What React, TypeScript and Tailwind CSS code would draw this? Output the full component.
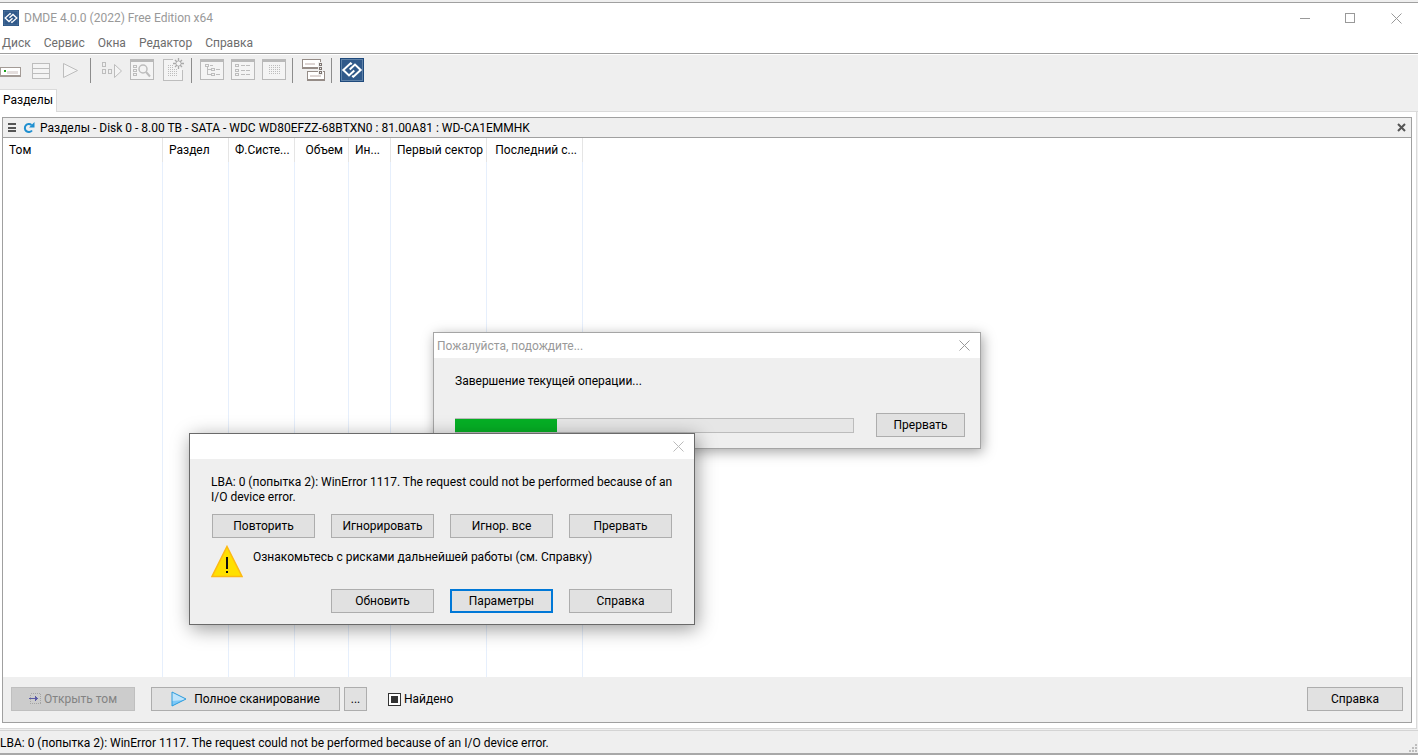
import type { ReactNode } from "react";

const columns = [
  { name: "Том", width: "w-[160px]", align: "text-left" },
  { name: "Раздел", width: "w-[66px]", align: "text-left" },
  { name: "Ф.Систе...", width: "w-[66px]", align: "text-left" },
  { name: "Объем", width: "w-[54px]", align: "text-right" },
  { name: "Ин...", width: "w-[42px]", align: "text-left" },
  { name: "Первый сектор", width: "w-[96px]", align: "text-right" },
  { name: "Последний с...", width: "w-[96px]", align: "text-right" },
];

const menu = ["Диск", "Сервис", "Окна", "Редактор", "Справка"];

const errorText =
  "LBA: 0 (попытка 2): WinError 1117. The request could not be performed because of an I/O device error.";

function Logo({ size }: { size: number }) {
  return (
    <svg width={size} height={size} viewBox="0 0 24 24" fill="none">
      <rect width="24" height="24" fill="#1f4a7c" />
      <rect x="1" y="1" width="22" height="22" fill="#5f82a8" />
      <rect x="2" y="2" width="20" height="20" fill="#30598a" />
      <g stroke="#fff" strokeWidth="2">
        <path d="M11.800 6.300 10.600 5.300 3.300 12 9 17.400l5.300-5" />
        <path d="M12.200 17.700l1.200 1L20.700 12 15 6.600l-5.300 5" />
      </g>
    </svg>
  );
}

function Close() {
  return (
    <svg width="11" height="11" viewBox="0 0 11 11">
      <path d="M0.500 0.500l10 10M10.500 0.500l-10 10" stroke="currentColor" fill="none" />
    </svg>
  );
}

function Icon({ children }: { children: ReactNode }) {
  return (
    <svg width="24" height="24" viewBox="0 0 24 24" fill="none" stroke="#bdbdbd" shapeRendering="crispEdges">
      {children}
    </svg>
  );
}

function Frame({ children }: { children?: ReactNode }) {
  return (
    <Icon>
      <rect x="0.500" y="1.500" width="23" height="20" stroke="#b9b9b9" fill="#f4f4f4" />
      <path d="M0 2.500h24" stroke="#b9b9b9" strokeWidth="3" />
      {children}
    </Icon>
  );
}

function Tool({ label, children }: { label: string; children: ReactNode }) {
  return (
    <button type="button" aria-label={label} className="size-6 shrink-0">
      {children}
    </button>
  );
}

function Sep() {
  return <div className="ml-1.5 mr-2 h-[25px] w-px bg-[#8c8c8c]" />;
}

function PushButton({ children, className = "" }: { children: ReactNode; className?: string }) {
  return (
    <button
      type="button"
      className={`flex h-6 items-center justify-center border bg-[#e1e1e1] ${className || "border-[#adadad]"}`}
    >
      {children}
    </button>
  );
}

function Toolbar() {
  return (
    <div className="flex h-[35px] items-start border-t border-white pt-[3px]">
      <div className="flex gap-1.5">
        <Tool label="Выбрать диск">
          <Icon>
            <rect x="0.500" y="9.500" width="20" height="9" rx="1" stroke="#a39b96" fill="#fff" />
            <path d="M1 18h19" stroke="#a39b96" strokeWidth="2" />
            <path d="M7 14.500h11" stroke="#e4dedd" strokeWidth="3" />
            <path d="M4 13h2" stroke="#1ba01b" strokeWidth="2" />
          </Icon>
        </Tool>
        <Tool label="Разделы">
          <Icon>
            <rect x="2.500" y="5.500" width="17" height="5" rx="1" fill="#f4f4f4" />
            <rect x="2.500" y="10.500" width="17" height="5" rx="1" fill="#f4f4f4" />
            <rect x="2.500" y="15.500" width="17" height="5" rx="1" fill="#f4f4f4" />
          </Icon>
        </Tool>
        <Tool label="Полное сканирование">
          <Icon>
            <path d="M3.500 5.500v14l14-7z" shapeRendering="auto" fill="#f4f4f4" />
          </Icon>
        </Tool>
      </div>
      <Sep />
      <div className="flex gap-[7px]">
        <Tool label="Продолжить">
          <Icon>
            <rect x="3.500" y="4.500" width="3" height="4" />
            <rect x="3.500" y="11.500" width="3" height="4" />
            <rect x="9.500" y="11.500" width="3" height="4" />
            <path d="M15.500 6.500v13l7-6.500z" shapeRendering="auto" fill="#f4f4f4" />
          </Icon>
        </Tool>
        <Tool label="Поиск">
          <Frame>
            <path d="M3.500 7.500h3v2h-3zM3.500 11.500h3v2h-3zM3.500 15.500h3v2h-3z" />
            <g shapeRendering="auto">
              <circle cx="13" cy="11" r="4" strokeWidth="1.500" />
              <path d="M16 14l4 4.500" strokeWidth="2" />
            </g>
          </Frame>
        </Tool>
        <Tool label="Новый">
          <Icon>
            <path d="M12 1.500H2.500v21h19V12" fill="#f4f4f4" />
            <path d="M7 7.500h5M7 9.500h6M7 11.500h10M7 13.500h10M7 15.500h10M7 17.500h10" strokeDasharray="1 1" />
            <g shapeRendering="auto">
              <circle cx="17.500" cy="5.500" r="2.500" fill="#f4f4f4" />
              <path
                d="M17.500 0v3M17.500 8v3M12 5.500h3M20 5.500h3M14 2l2 2M19 7l2 2M21 2l-2 2M14 9l2-2"
                stroke="#aaa"
                strokeWidth="1.300"
              />
            </g>
          </Icon>
        </Tool>
      </div>
      <Sep />
      <div className="flex gap-[7px]">
        <Tool label="Дерево">
          <Frame>
            <path d="M5.500 6.500h3v2h-3zM11.500 10.500h3v2h-3zM11.500 15.500h3v2h-3zM7.500 9v7.500H11M8 11.500h3M10 7.500h3M16 11.500h4M16 16.500h4" />
          </Frame>
        </Tool>
        <Tool label="Список">
          <Frame>
            <path d="M4.500 6.500h3v2h-3zM4.500 11.500h3v2h-3zM4.500 15.500h3v2h-3zM10 7.500h4M15 7.500h4M10 12.500h4M15 12.500h4M10 16.500h4M15 16.500h4" />
          </Frame>
        </Tool>
        <Tool label="Дамп">
          <Frame>
            <path
              d="M7 7.500h11M7 9.500h11M7 11.500h11M7 13.500h11M7 15.500h11"
              strokeDasharray="1 1"
            />
          </Frame>
        </Tool>
      </div>
      <Sep />
      <Tool label="Окна">
        <Icon>
          <rect x="1.500" y="1.500" width="18" height="9" rx="1" stroke="#958c87" fill="#fff" />
          <path d="M2 10h17" stroke="#958c87" strokeWidth="2" />
          <rect x="6.500" y="13.500" width="17" height="9" rx="1" stroke="#958c87" fill="#fff" />
          <path d="M7 22h16" stroke="#958c87" strokeWidth="2" />
          <path d="M4 6h10M9 18h11" stroke="#ddd5d3" strokeWidth="2" />
          <path d="M17 4h5v13h-5z" fill="#efefef" stroke="none" />
          <path d="M18.500 5.500h2v2h-2zM18.500 9.500h2v2h-2zM18.500 13.500h2v2h-2z" stroke="#7c7470" />
        </Icon>
      </Tool>
      <Sep />
      <Tool label="О программе">
        <Logo size={24} />
      </Tool>
    </div>
  );
}

function WaitDialog() {
  return (
    <section
      aria-label="Пожалуйста, подождите..."
      className="absolute left-[433px] top-[332px] w-[548px] border border-[#a5a5a5] bg-[#efefef] shadow-[2px_3px_12px_rgba(0,0,0,0.35)]"
    >
      <header className="flex h-[25px] items-center justify-between bg-white pl-[3px] pr-2.5 text-[#999]">
        <span>Пожалуйста, подождите...</span>
        <button type="button" aria-label="Закрыть">
          <Close />
        </button>
      </header>
      <div className="pb-[11px] pl-[21px] pr-[15px] pt-[15px]">
        <p>Завершение текущей операции...</p>
        <div className="mt-6 flex items-center">
          <div className="h-[15px] flex-1 border border-l-0 border-[#bcbcbc] bg-[#e6e6e6]">
            <div className="h-full w-[102px] bg-[#06b025]" />
          </div>
          <PushButton className="ml-[22px] w-[89px] border-[#adadad]">Прервать</PushButton>
        </div>
      </div>
    </section>
  );
}

function ErrorDialog() {
  return (
    <section
      aria-label="Ошибка"
      className="absolute left-[189px] top-[433px] w-[506px] border border-[#6a6a6a] bg-[#efefef] shadow-[2px_4px_18px_rgba(0,0,0,0.4)]"
    >
      <header className="flex h-[25px] items-center justify-end bg-white pr-2.5 text-[#bbb]">
        <button type="button" aria-label="Закрыть">
          <Close />
        </button>
      </header>
      <div className="pb-[11px] pt-4">
        <p className="pl-[21px] pr-3 leading-[15px]">{errorText}</p>
        <div className="mt-[9px] grid grid-cols-4 gap-4 px-[22px]">
          <PushButton>Повторить</PushButton>
          <PushButton>Игнорировать</PushButton>
          <PushButton>Игнор. все</PushButton>
          <PushButton>Прервать</PushButton>
        </div>
        <div className="mt-[7px] flex gap-2.5 px-[21px]">
          <svg width="32" height="33" viewBox="0 0 32 33">
            <path d="M16 1.500 31 31.500H1z" fill="#ffe000" stroke="#fdb913" strokeWidth="1.500" />
            <path d="M15 12h2v12h-2zM15 26h2v2h-2z" fill="#111" />
          </svg>
          <p className="pt-1">Ознакомьтесь с рисками дальнейшей работы (см. Справку)</p>
        </div>
        <div className="mt-[11px] grid grid-cols-4 gap-4 px-[22px]">
          <PushButton className="col-start-2 border-[#adadad]">Обновить</PushButton>
          <PushButton className="border-2 border-[#0078d7]">Параметры</PushButton>
          <PushButton>Справка</PushButton>
        </div>
      </div>
    </section>
  );
}

export default function App() {
  return (
    <div className="relative flex h-screen flex-col overflow-hidden bg-[#efefef] font-['Roboto','Noto_Sans',sans-serif] text-[12px] leading-4 text-black">
      <header className="mt-0.5 border-b border-t border-[#a0a0a0] bg-white text-[#999]">
        <div className="flex h-[30px] items-center pl-[3px] pr-4">
          <Logo size={16} />
          <h1 className="ml-[5px] flex-1">DMDE 4.0.0 (2022) Free Edition x64</h1>
          <div className="flex gap-[35px]">
            <button type="button" aria-label="Свернуть">
              <svg width="11" height="11">
                <path d="M1 5.500h10" stroke="currentColor" />
              </svg>
            </button>
            <button type="button" aria-label="Развернуть">
              <svg width="11" height="11">
                <rect x="0.500" y="0.500" width="9" height="9" fill="none" stroke="currentColor" />
              </svg>
            </button>
            <button type="button" aria-label="Закрыть">
              <Close />
            </button>
          </div>
        </div>
        <nav className="flex h-5 items-center gap-[13px] pl-0.5 text-[#6d6d6d]">
          {menu.map((item) => (
            <a key={item} href="#">
              {item}
            </a>
          ))}
        </nav>
      </header>

      <Toolbar />

      {/* Tabs */}
      <div className="flex h-[23px] shrink-0 items-stretch">
        <button type="button" className="w-[57px] border-r border-t border-[#dadada] bg-white pb-0.5 pl-[3px] text-left">
          Разделы
        </button>
        <div className="flex-1 border-b border-[#dadada]" />
      </div>

      {/* Partition panel */}
      <main className="mr-px flex min-h-0 flex-1 flex-col border-b border-r border-[#dadada] bg-white pb-[5px] pl-0.5 pr-1 pt-[5px]">
        <div className="flex min-h-0 flex-1 flex-col border border-[#a0a0a0] bg-[#efefef]">
          <div className="flex h-5 shrink-0 items-center border-b border-[#a0a0a0] px-[5px]">
            <svg width="8" height="9" shapeRendering="crispEdges">
              <path d="M0 1h8M0 4.500h8M0 8h8" stroke="#555" strokeWidth="2" />
            </svg>
            <svg width="12" height="12" viewBox="0 0 12 12" className="ml-[7px]" fill="none">
              <path d="M8.500 3A4 4 0 1 0 9 8.500" stroke="#1e8fd0" strokeWidth="2" />
              <path d="M11.500 0v5.500H6z" fill="#1e8fd0" />
            </svg>
            <h2 className="ml-[5px] flex-1">
              Разделы - Disk 0 - 8.00 TB - SATA - WDC WD80EFZZ-68BTXN0 : 81.00A81 : WD-CA1EMMHK
            </h2>
            <button type="button" aria-label="Закрыть панель">
              <svg width="9" height="9">
                <path d="M1 1l7 7M8 1l-7 7" stroke="#555" strokeWidth="2" />
              </svg>
            </button>
          </div>
          <div className="min-h-0 flex-1 bg-white">
            <table className="h-full w-[580px] table-fixed border-separate border-spacing-0">
              <thead>
                <tr className="h-6">
                  {columns.map((c) => (
                    <th
                      key={c.name}
                      className={`${c.width} ${c.align} whitespace-nowrap border-r border-[#e5e5e5] pl-1.5 pr-[5px] font-normal`}
                    >
                      {c.name}
                    </th>
                  ))}
                </tr>
              </thead>
              <tbody>
                <tr>
                  {columns.map((c) => (
                    <td key={c.name} className="border-r border-[#e6effc]" />
                  ))}
                </tr>
              </tbody>
            </table>
          </div>
          <footer className="flex h-[45px] shrink-0 items-start px-2 pt-2.5">
            <button
              type="button"
              disabled
              className="flex h-6 w-[124px] items-center justify-center gap-[3px] border border-[#bfbfbf] bg-[#cccccc] text-[#838383]"
            >
              <svg width="12" height="12" fill="none" shapeRendering="crispEdges">
                <rect x="1.500" y="0.500" width="10" height="10" stroke="#a5a5a5" strokeDasharray="1 1" />
                <path d="M0 5.500h9M6.500 3v5M7.500 4v3" stroke="#5a5aa5" />
              </svg>
              Открыть том
            </button>
            <PushButton className="ml-4 w-[189px] gap-[7px] border-[#adadad]">
              <svg width="16" height="16" viewBox="0 0 16 16">
                <path d="M1 1v14l14-7z" fill="#bfe4fb" />
                <path d="M1 10l12-1L1 15z" fill="#7cc8f8" />
                <path d="M1 1v14l14-7z" fill="none" stroke="#2a9bdc" />
              </svg>
              Полное сканирование
            </PushButton>
            <PushButton className="ml-1 w-[23px] border-[#adadad]">...</PushButton>
            <label className="ml-[21px] flex h-6 items-center gap-[3px]">
              <input
                type="checkbox"
                className="grid size-[13px] appearance-none place-items-center border border-[#333] bg-white before:size-[7px] before:bg-[#333] before:content-['']"
              />
              Найдено
            </label>
            <PushButton className="ml-auto w-24 border-[#adadad]">Справка</PushButton>
          </footer>
        </div>
      </main>

      <footer className="mt-px flex h-[25px] shrink-0 items-center justify-between border-b-2 border-t border-b-[#a8a8a8] border-t-[#d4d4d4]">
        <span className="pt-0.5">{errorText}</span>
        <svg width="9" height="9" className="self-end" fill="#bdbdbd" shapeRendering="crispEdges">
          <path d="M6 0h2v2h-2zM3 3h2v2h-2zM6 3h2v2h-2zM0 6h2v2h-2zM3 6h2v2h-2zM6 6h2v2h-2z" />
        </svg>
      </footer>

      <WaitDialog />
      <ErrorDialog />
    </div>
  );
}
